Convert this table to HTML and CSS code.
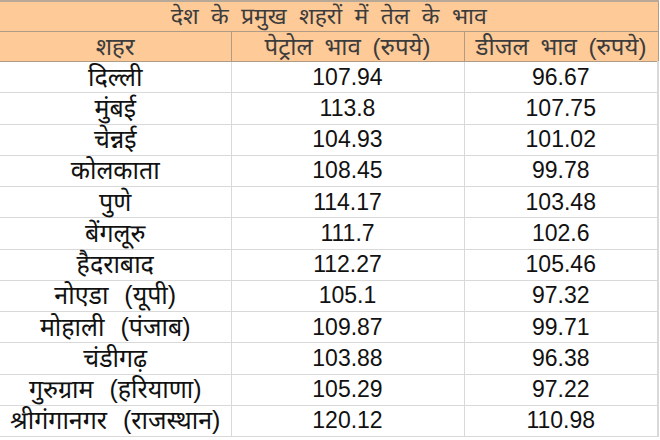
FILE: index.html
```html
<!DOCTYPE html>
<html lang="hi">
<head>
<meta charset="utf-8">
<title>देश के प्रमुख शहरों में तेल के भाव</title>
<link rel="stylesheet" href="styles.css">
</head>
<body>
<table class="prices">
  <colgroup><col class="c1"><col class="c2"><col class="c3"></colgroup>
  <thead>
    <tr class="title"><th colspan="3">देश के प्रमुख शहरों में तेल के भाव</th></tr>
    <tr class="heads"><th>शहर</th><th>पेट्रोल भाव (रुपये)</th><th>डीजल भाव (रुपये)</th></tr>
  </thead>
  <tbody>
    <tr><td class="city">दिल्ली</td><td>107.94</td><td>96.67</td></tr>
    <tr><td class="city">मुंबई</td><td>113.8</td><td>107.75</td></tr>
    <tr><td class="city">चेन्नई</td><td>104.93</td><td>101.02</td></tr>
    <tr><td class="city">कोलकाता</td><td>108.45</td><td>99.78</td></tr>
    <tr><td class="city">पुणे</td><td>114.17</td><td>103.48</td></tr>
    <tr><td class="city">बेंगलूरु</td><td>111.7</td><td>102.6</td></tr>
    <tr><td class="city">हैदराबाद</td><td>112.27</td><td>105.46</td></tr>
    <tr><td class="city">नोएडा (यूपी)</td><td>105.1</td><td>97.32</td></tr>
    <tr><td class="city">मोहाली (पंजाब)</td><td>109.87</td><td>99.71</td></tr>
    <tr><td class="city">चंडीगढ़</td><td>103.88</td><td>96.38</td></tr>
    <tr><td class="city">गुरुग्राम (हरियाणा)</td><td>105.29</td><td>97.22</td></tr>
    <tr><td class="city">श्रीगंगानगर (राजस्थान)</td><td>120.12</td><td>110.98</td></tr>
  </tbody>
</table>
</body>
</html>
```
FILE: styles.css
```css
html, body {
  margin: 0;
  padding: 0;
  background: #ffffff;
}
.prices {
  border-collapse: collapse;
  table-layout: fixed;
  width: 658px;
  margin: 0;
  font-family: "Liberation Sans", "Noto Sans Devanagari", "Lohit Devanagari", "Noto Sans", sans-serif;
  color: #111111;
}
.c1 { width: 231px; }
.c2 { width: 233px; }
.c3 { width: 194px; }
.prices th {
  background: #fdca98;
  color: #3c3c3c;
  font-weight: normal;
  font-size: 24px;
  word-spacing: 5px;
  height: 29px;
  padding: 0;
  border: 1px solid #b09c86;
  text-align: center;
  vertical-align: middle;
  line-height: 1;
  white-space: nowrap;
}
.prices .title th {
  border-top: 2px solid #b7a898;
  font-size: 23px;
  word-spacing: 6px;
}
.prices th:first-child,
.prices td:first-child {
  border-left: none;
}
.prices td {
  height: 30.25px;
  padding: 0;
  font-size: 23px;
  text-align: center;
  vertical-align: middle;
  border: 1px solid #d9d9d9;
  border-right: 2px solid #d9d9d9;
  line-height: 1;
  white-space: nowrap;
}
.prices td.city {
  font-size: 25px;
  word-spacing: 9px;
  border-right: 1px solid #d9d9d9;
}
.prices td:nth-child(2) {
  border-right: 1px solid #d9d9d9;
}
```
